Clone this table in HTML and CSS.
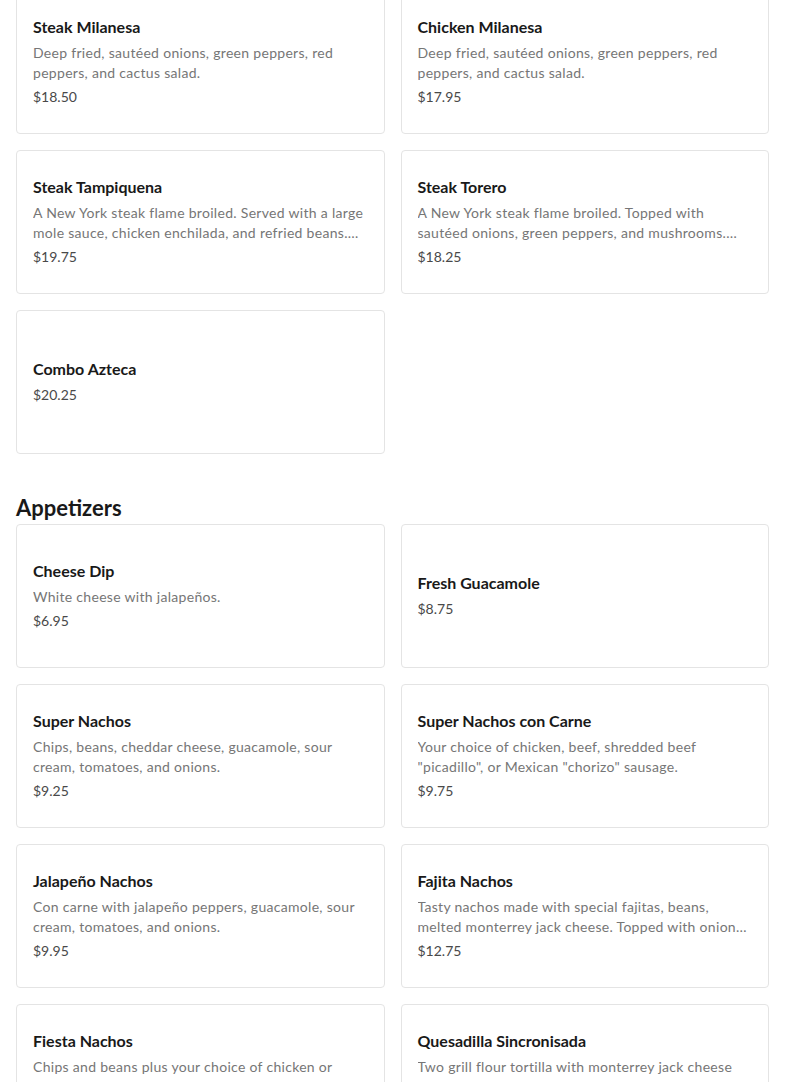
FILE: index.html
```html
<!DOCTYPE html>
<html lang="en">
<head>
<meta charset="utf-8">
<link rel="stylesheet" href="styles.css">
</head>
<body>
<main class="menu">
  <section class="section">
    <div class="grid">
      <div class="card"><div class="title">Steak Milanesa</div><div class="desc">Deep fried, sautéed onions, green peppers, red peppers, and cactus salad.</div><div class="price">$18.50</div></div>
      <div class="card"><div class="title">Chicken Milanesa</div><div class="desc">Deep fried, sautéed onions, green peppers, red peppers, and cactus salad.</div><div class="price">$17.95</div></div>
      <div class="card"><div class="title">Steak Tampiquena</div><div class="desc">A New York steak flame broiled. Served with a large mole sauce, chicken enchilada, and refried beans. Served with rice and tortillas.</div><div class="price">$19.75</div></div>
      <div class="card"><div class="title">Steak Torero</div><div class="desc">A New York steak flame broiled. Topped with sautéed onions, green peppers, and mushrooms. Served with rice and beans.</div><div class="price">$18.25</div></div>
      <div class="card"><div class="title">Combo Azteca</div><div class="price">$20.25</div></div>
    </div>
  </section>
  <section class="section">
    <h2 class="heading">Appetizers</h2>
    <div class="grid">
      <div class="card"><div class="title">Cheese Dip</div><div class="desc">White cheese with jalapeños.</div><div class="price">$6.95</div></div>
      <div class="card"><div class="title">Fresh Guacamole</div><div class="price">$8.75</div></div>
      <div class="card"><div class="title">Super Nachos</div><div class="desc">Chips, beans, cheddar cheese, guacamole, sour cream, tomatoes, and onions.</div><div class="price">$9.25</div></div>
      <div class="card"><div class="title">Super Nachos con Carne</div><div class="desc">Your choice of chicken, beef, shredded beef "picadillo", or Mexican "chorizo" sausage.</div><div class="price">$9.75</div></div>
      <div class="card"><div class="title">Jalapeño Nachos</div><div class="desc">Con carne with jalapeño peppers, guacamole, sour cream, tomatoes, and onions.</div><div class="price">$9.95</div></div>
      <div class="card"><div class="title">Fajita Nachos</div><div class="desc">Tasty nachos made with special fajitas, beans,<br>melted monterrey jack cheese. Topped with onions, tomatoes and sour cream.</div><div class="price">$12.75</div></div>
      <div class="card"><div class="title">Fiesta Nachos</div><div class="desc">Chips and beans plus your choice of chicken or beef, topped with cheese, guacamole and sour cream.</div><div class="price">$10.50</div></div>
      <div class="card"><div class="title">Quesadilla Sincronisada</div><div class="desc">Two grill flour tortilla with monterrey jack cheese and ham, served with guacamole and sour cream.</div><div class="price">$9.50</div></div>
    </div>
  </section>
</main>
</body>
</html>
```
FILE: styles.css
```css
* { box-sizing: border-box; }
html, body { margin: 0; padding: 0; background: #fff; }
body {
  font-family: "Lato", "Open Sans", sans-serif;
  color: #191919;
  overflow: hidden;
}
.menu {
  padding: 0 16px;
  margin-top: -10px;
}
.heading {
  margin: 40px 0 2px;
  font-size: 22px;
  line-height: 28px;
  font-weight: 700;
  color: #191919;
}
.grid {
  display: grid;
  grid-template-columns: 1fr 1fr;
  gap: 16px;
}
.card {
  height: 144px;
  border: 1px solid #e4e4e4;
  border-radius: 4px;
  padding: 0 16px;
  display: flex;
  flex-direction: column;
  justify-content: center;
  background: #fff;
}
.title {
  font-size: 16px;
  line-height: 24px;
  font-weight: 700;
  color: #191919;
}
.desc {
  margin-top: 4px;
  font-size: 14px;
  line-height: 20px;
  max-height: 40px;
  color: #767676;
  letter-spacing: 0.3px;
  display: -webkit-box;
  -webkit-line-clamp: 2;
  -webkit-box-orient: vertical;
  overflow: hidden;
}
.price {
  margin-top: 2px;
  font-size: 14px;
  line-height: 24px;
  color: #494949;
}
```
